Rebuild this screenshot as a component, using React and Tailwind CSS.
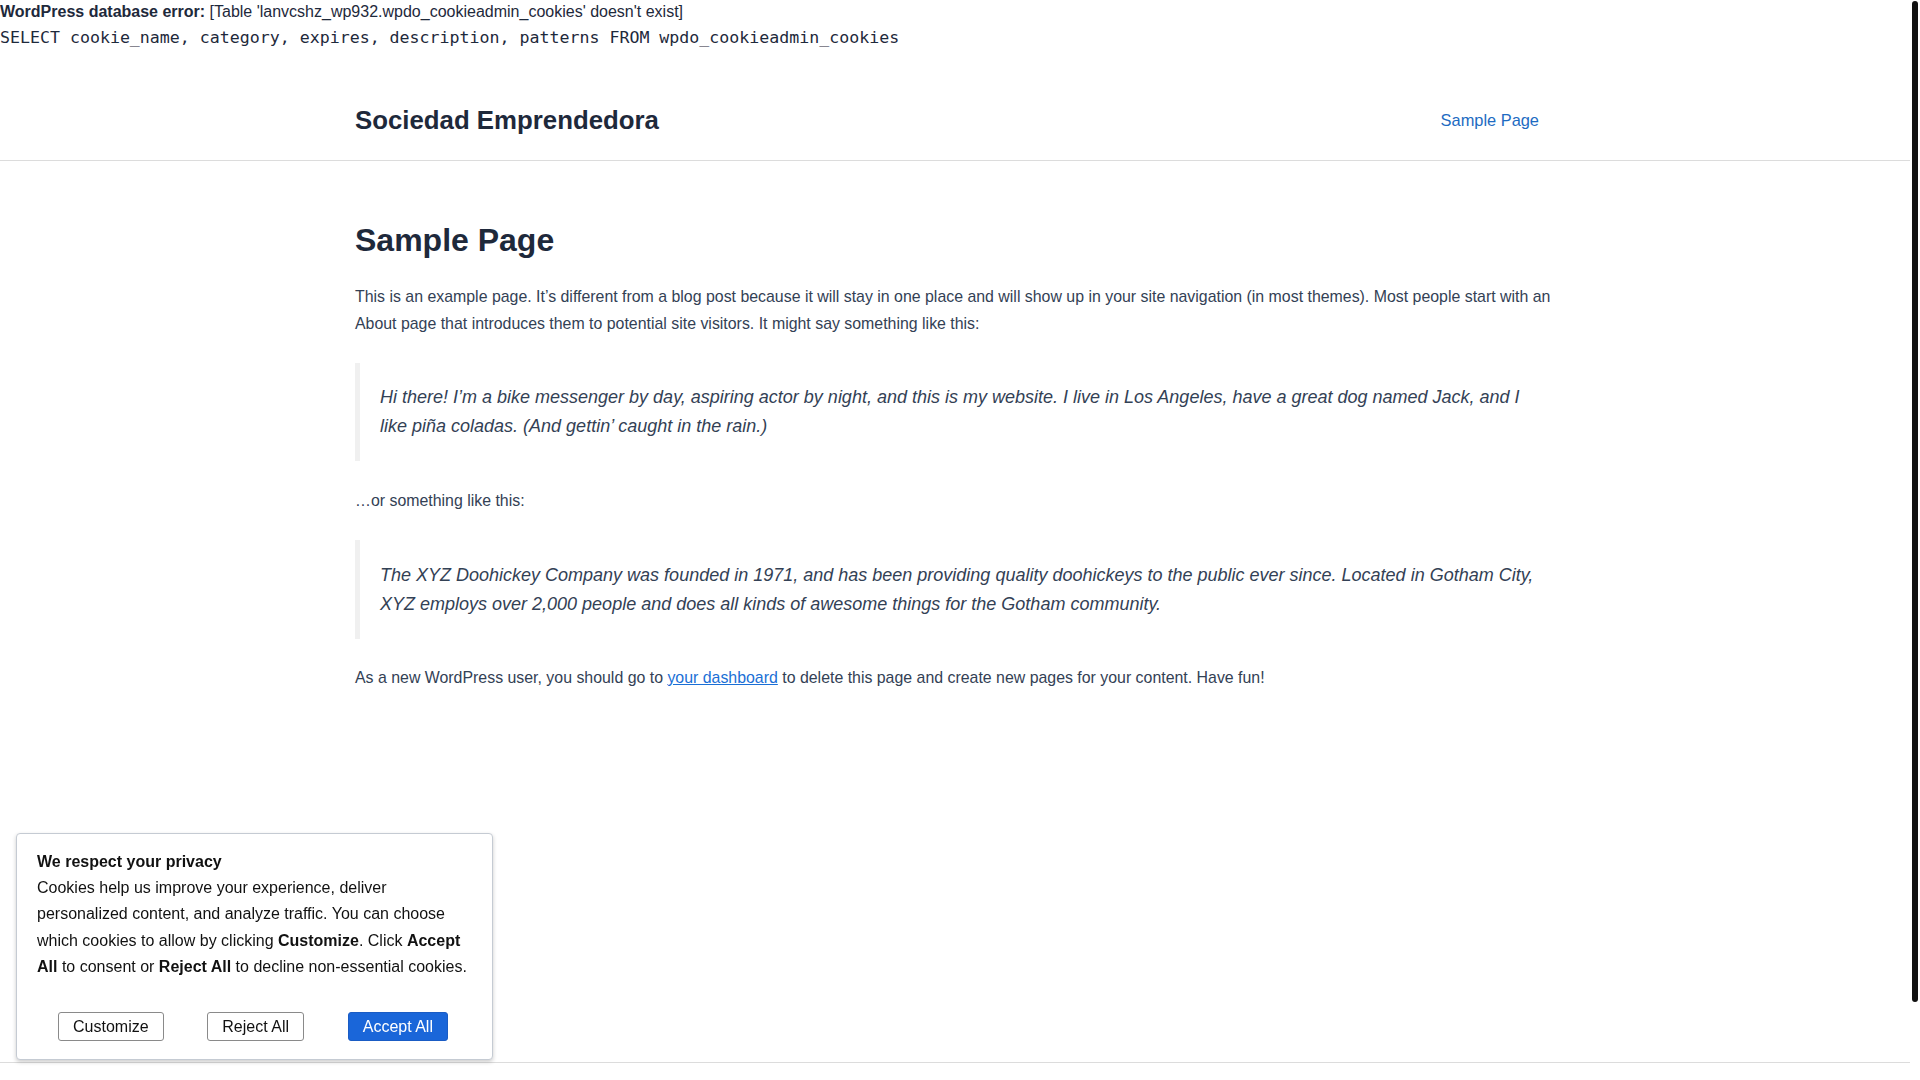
import React from "react";

export default function App() {
  return (
    <div className="flex h-screen bg-white font-['Liberation_Sans',Arial,sans-serif] text-[#1e293b]">
      <div className="min-w-0 flex-1 overflow-y-auto [scrollbar-width:none]">
        {/* DB error */}
        <div className="text-[16px] leading-[24px] text-[#1e293b]">
          <b>WordPress database error:</b> [Table 'lanvcshz_wp932.wpdo_cookieadmin_cookies' doesn't exist]
        </div>
        <div className="font-['DejaVu_Sans_Mono',monospace] text-[16.6px] leading-[28px] text-[#1e293b] whitespace-pre">
          SELECT cookie_name, category, expires, description, patterns FROM wpdo_cookieadmin_cookies
        </div>

        {/* Header */}
        <header className="mt-[28px] border-b border-[#dcdcdc]">
          <div className="mx-auto flex h-[80px] max-w-[1200px] items-center justify-between">
            <div className="text-[25.8px] font-bold text-[#1e293b]">Sociedad Emprendedora</div>
            <nav className="pr-4">
              <a href="#" className="text-[16.4px] text-[#1d6bc2]">Sample Page</a>
            </nav>
          </div>
        </header>

        {/* Content */}
        <main className="mx-auto max-w-[1200px] pt-[60px] pb-[371px]">
          <h1 className="text-[32px] font-bold leading-[38px] text-[#1e293b]">Sample Page</h1>
          <p className="mt-[24px] text-[15.9px] leading-[27.2px] text-[#334155]">
            This is an example page. It’s different from a blog post because it will stay in one place and will show up in your site navigation (in most themes). Most people start with an About page that introduces them to potential site visitors. It might say something like this:
          </p>
          <blockquote className="mt-[26px] border-l-[5px] border-[#f0f0f0] py-5 pl-5 pr-5 text-[18px] italic leading-[28.8px] text-[#334155]">
            Hi there! I’m a bike messenger by day, aspiring actor by night, and this is my website. I live in Los Angeles, have a great dog named Jack, and I like piña coladas. (And gettin’ caught in the rain.)
          </blockquote>
          <p className="mt-[26px] text-[15.9px] leading-[27.2px] text-[#334155]">…or something like this:</p>
          <blockquote className="mt-[26px] border-l-[5px] border-[#f0f0f0] pt-[21px] pb-5 pl-5 pr-5 text-[18px] italic leading-[28.8px] text-[#334155]">
            The XYZ Doohickey Company was founded in 1971, and has been providing quality doohickeys to the public ever since. Located in Gotham City, XYZ employs over 2,000 people and does all kinds of awesome things for the Gotham community.
          </blockquote>
          <p className="mt-[25px] text-[15.9px] leading-[27.2px] text-[#334155]">
            As a new WordPress user, you should go to{" "}
            <a href="#" className="text-[#1a6fd6] underline">your dashboard</a>{" "}
            to delete this page and create new pages for your content. Have fun!
          </p>
        </main>

        {/* Footer */}
        <footer className="h-[103px] border-t border-[#dcdcdc]"></footer>
      </div>

      {/* Scrollbar */}
      <div className="w-[10px] shrink-0 bg-white pt-[1px]">
        <div className="ml-[2px] h-[1001px] w-[6px] rounded-[3px] bg-[#111]"></div>
      </div>

      {/* Cookie banner */}
      <div className="fixed bottom-[20px] left-[16px] w-[477px] rounded-[4px] border border-[#c5cbd3] bg-white px-5 pt-[15px] pb-[18px] text-[16px] leading-[26px] text-[#111] shadow-[0_2px_4px_rgba(0,0,0,0.2)]">
        <p className="font-bold">We respect your privacy</p>
        <p className="leading-[26.6px]">
          Cookies help us improve your experience, deliver personalized content, and analyze traffic. You can choose which cookies to allow by clicking <b>Customize</b>. Click <b>Accept All</b> to consent or <b>Reject All</b> to decline non-essential cookies.
        </p>
        <div className="mt-[31px] flex justify-between pl-[21px] pr-[24px]">
          <button className="rounded-[3px] border border-[#8a8a8a] bg-white px-[14px] py-[4px] text-[16px] leading-[19px] text-[#111]">Customize</button>
          <button className="rounded-[3px] border border-[#8a8a8a] bg-white px-[14px] py-[4px] text-[16px] leading-[19px] text-[#111]">Reject All</button>
          <button className="rounded-[3px] border border-[#1a5cc4] bg-[#1a66d9] px-[14px] py-[4px] text-[16px] leading-[19px] text-white">Accept All</button>
        </div>
      </div>
    </div>
  );
}
